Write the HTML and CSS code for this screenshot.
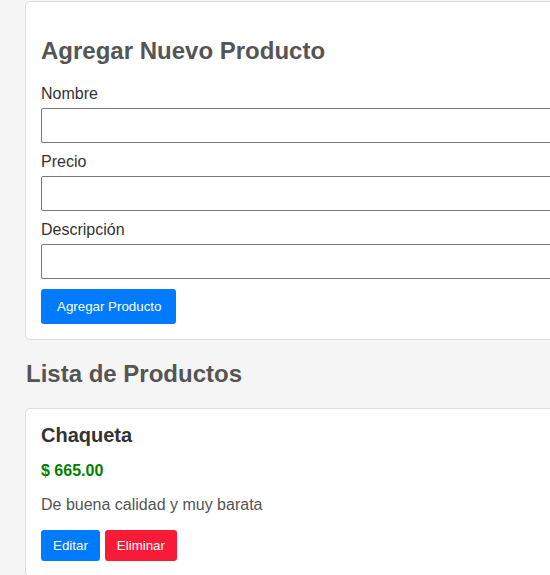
FILE: index.html
```html
<!DOCTYPE html>
<html lang="es">
<head>
<meta charset="utf-8">
<title>Productos</title>
<link rel="stylesheet" href="styles.css">
</head>
<body>
<div class="container">
  <div class="card form-card">
    <h2 class="title">Agregar Nuevo Producto</h2>
    <div class="field">
      <label class="label">Nombre</label>
      <input class="input" type="text">
    </div>
    <div class="field">
      <label class="label">Precio</label>
      <input class="input" type="text">
    </div>
    <div class="field">
      <label class="label">Descripción</label>
      <input class="input" type="text">
    </div>
    <button class="btn btn-primary btn-lg">Agregar Producto</button>
  </div>
  <h2 class="section-title">Lista de Productos</h2>
  <div class="card product-card">
    <h3 class="product-name">Chaqueta</h3>
    <p class="product-price">$ 665.00</p>
    <p class="product-desc">De buena calidad y muy barata</p>
    <div class="actions">
      <button class="btn btn-primary btn-sm">Editar</button>
      <button class="btn btn-danger btn-sm">Eliminar</button>
    </div>
  </div>
</div>
</body>
</html>
```
FILE: styles.css
```css
html, body {
  margin: 0;
  padding: 0;
}
body {
  background: #f5f5f5;
  font-family: "Liberation Sans", Arial, sans-serif;
  color: #333;
}
.container {
  width: 800px;
  padding: 1px 0 0 25px;
}
.card {
  background: #fff;
  border: 1px solid #ddd;
  border-radius: 5px;
  padding: 15px;
}
.title {
  font-size: 24px;
  color: #555;
  margin: 20px 0 20px;
}
.field {
  margin-bottom: 10px;
}
.label {
  display: block;
  font-size: 16px;
  color: #333;
  margin-bottom: 5px;
}
.input {
  display: block;
  box-sizing: border-box;
  width: 100%;
  height: 35px;
  border: 1px solid #767676;
  border-radius: 2px;
  padding: 8px;
  font-size: 15px;
  font-family: inherit;
  background: #fff;
}
.btn {
  border: none;
  border-radius: 3px;
  color: #fff;
  font-family: inherit;
  font-size: 13.333px;
  line-height: 15px;
  cursor: pointer;
}
.btn-lg {
  margin: 0;
  padding: 10px 15px 10px 16px;
}
.btn-sm {
  padding: 8px 12px;
}
.btn-primary {
  background: #007bff;
}
.btn-danger {
  background: #f71b38;
}
.section-title {
  font-size: 24px;
  color: #555;
  margin: 20px 0 20px 1px;
}
.product-name {
  font-size: 20px;
  color: #333;
  margin: 0 0 15px;
}
.product-price {
  font-size: 16px;
  font-weight: bold;
  color: #008000;
  margin: 0 0 16px;
}
.product-desc {
  font-size: 16px;
  color: #555;
  margin: 0 0 16px;
}
.actions {
  display: flex;
  gap: 5px;
}
```
